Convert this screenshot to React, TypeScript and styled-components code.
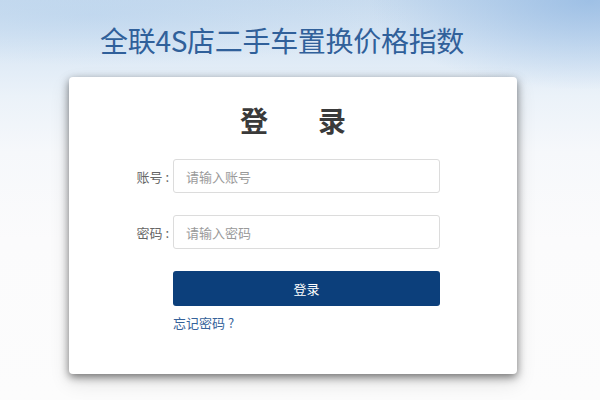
import { Component } from "react";
import styled, { createGlobalStyle } from "styled-components";

const GlobalStyle = createGlobalStyle`
  html, body {
    margin: 0;
    padding: 0;
  }
  body {
    font-family: "Noto Sans CJK SC", "Noto Sans", "Liberation Sans", sans-serif;
  }
`;

const Page = styled.div`
  width: 600px;
  height: 400px;
  overflow: hidden;
  display: flex;
  flex-direction: column;
  background:
    radial-gradient(ellipse 220px 90px at 590px 0px, rgba(140, 180, 225, 0.7), rgba(140, 180, 225, 0) 100%),
    radial-gradient(ellipse 320px 50px at 90px 15px, rgba(180, 208, 236, 0.5), rgba(180, 208, 236, 0) 100%),
    linear-gradient(180deg, #c9dcef 0%, #dbe8f5 12%, #ebf2f9 24%, #f6f8fb 38%, #fbfbfc 60%, #fcfcfc 100%);
`;

const Header = styled.h1`
  margin: 0;
  padding: 22px 0 0 100px;
  height: 55px;
  box-sizing: border-box;
  font-size: 28px;
  line-height: 36px;
  font-weight: 400;
  color: #30609a;
  letter-spacing: -0.3px;
`;

const Card = styled.div`
  margin-left: 69px;
  margin-top: 22px;
  width: 448px;
  height: 297px;
  box-sizing: border-box;
  background: #fff;
  border-radius: 4px;
  box-shadow: 0 3px 9px rgba(0, 0, 0, 0.5), 0 8px 20px rgba(0, 0, 0, 0.12);
  padding-top: 26px;
  display: flex;
  flex-direction: column;
`;

const Title = styled.h2`
  margin: 0;
  text-align: center;
  font-size: 28px;
  line-height: 34px;
  font-weight: 700;
  color: #3a3a3a;
  letter-spacing: 50px;
  padding-left: 50px;
`;

const Form = styled.div`
  margin-top: 22px;
  display: flex;
  flex-direction: column;
  gap: 22px;
`;

const Row = styled.div`
  display: flex;
  align-items: center;
`;

const Label = styled.label`
  width: 104px;
  text-align: right;
  box-sizing: border-box;
  padding-right: 4px;
  font-size: 13px;
  color: #666;
`;

const Input = styled.input`
  width: 267px;
  height: 34px;
  box-sizing: border-box;
  border: 1px solid #dcdcdc;
  border-radius: 3px;
  padding: 0 12px;
  font-family: inherit;
  font-size: 13px;
  color: #333;
  outline: none;
  &::placeholder {
    color: #9a9a9a;
  }
`;

const Actions = styled.div`
  padding-left: 104px;
  display: flex;
  flex-direction: column;
  align-items: flex-start;
`;

const SubmitButton = styled.button`
  width: 267px;
  height: 35px;
  border: none;
  border-radius: 3px;
  background: #0c3f7b;
  color: #fff;
  font-family: inherit;
  font-size: 13px;
  cursor: pointer;
`;

const ForgotLink = styled.a`
  margin-top: 8px;
  font-size: 13px;
  line-height: 18px;
  color: #35629a;
  text-decoration: none;
  cursor: pointer;
`;

export default class App extends Component {
  render() {
    return (
      <Page>
        <GlobalStyle />
        <Header>全联4S店二手车置换价格指数</Header>
        <Card>
          <Title>登录</Title>
          <Form>
            <Row>
              <Label>账号 :</Label>
              <Input placeholder="请输入账号" />
            </Row>
            <Row>
              <Label>密码 :</Label>
              <Input type="password" placeholder="请输入密码" />
            </Row>
            <Actions>
              <SubmitButton>登录</SubmitButton>
              <ForgotLink>忘记密码 ?</ForgotLink>
            </Actions>
          </Form>
        </Card>
      </Page>
    );
  }
}
